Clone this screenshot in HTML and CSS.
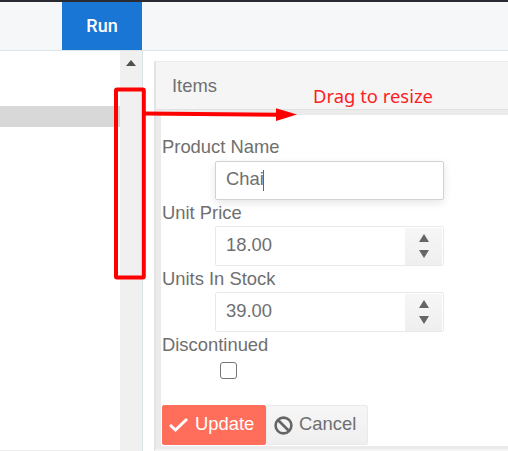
FILE: index.html
```html
<!DOCTYPE html>
<html lang="en">
<head>
<meta charset="utf-8">
<title>Editor preview</title>
<link rel="stylesheet" href="styles.css">
</head>
<body>
<header class="toolbar"><button class="run">Run</button></header>
<main class="workspace">
  <section class="code">
    <div class="lines"><div class="active-line"></div></div>
    <div class="scrollbar"><svg width="10" height="6" viewBox="0 0 10 6"><path d="M0 6L5 0L10 6Z" fill="#505050"/></svg></div>
  </section>
  <section class="preview">
    <div class="grid">
      <div class="grid-header">Items</div>
      <form class="editor">
        <label class="name">Product Name</label>
        <div class="field focused"><span class="value">Chai</span><i class="caret"></i></div>
        <label class="name">Unit Price</label>
        <div class="field"><span class="value">18.00</span>
          <span class="spinner"><svg width="10" height="24" viewBox="0 0 10 24"><path d="M0 8L5 0L10 8ZM0 16L5 24L10 16Z" fill="#656565"/></svg></span>
        </div>
        <label class="name">Units In Stock</label>
        <div class="field"><span class="value">39.00</span>
          <span class="spinner"><svg width="10" height="24" viewBox="0 0 10 24"><path d="M0 8L5 0L10 8ZM0 16L5 24L10 16Z" fill="#656565"/></svg></span>
        </div>
        <label class="name">Discontinued</label>
        <span class="check"></span>
        <div class="actions">
          <button type="button" class="btn primary"><svg width="20" height="16" viewBox="0 0 20 16"><path d="M1 8L6.5 13L18 2" fill="none" stroke="#fff" stroke-width="3"/></svg><span>Update</span></button>
          <button type="button" class="btn cancel"><svg width="19" height="19" viewBox="0 0 19 19"><g fill="none" stroke="#656565" stroke-width="2.6"><circle cx="9.5" cy="9.5" r="7.9"/><path d="M4 4L15 15"/></g></svg><span>Cancel</span></button>
        </div>
      </form>
    </div>
  </section>
</main>
<svg class="annotation" width="508" height="451" viewBox="0 0 508 451">
  <rect x="116" y="89.5" width="27.8" height="188" rx="1" fill="none" stroke="#f00" stroke-width="4"/>
  <path d="M143 113.4L278 114.7" stroke="#f00" stroke-width="4"/>
  <path d="M276 108.3L297 114.6L276 121Z" fill="#f00"/>
  <text class="note" x="313" y="102.5" textLength="120" lengthAdjust="spacingAndGlyphs">Drag to resize</text>
</svg>
</body>
</html>
```
FILE: styles.css
```css
* { box-sizing: border-box; }
body {
  margin: 0;
  height: 451px;
  display: flex;
  flex-direction: column;
  overflow: hidden;
  background: #fff;
  color: #6f6f6f;
  font: 18.4px "Liberation Sans", Arial, sans-serif;
}
.toolbar {
  flex: 0 0 51px;
  padding-left: 62px;
  background: #f5f7f9;
  border-top: 2px solid #2b2a32;
  border-bottom: 1px solid #dce5e8;
}
.run {
  display: block;
  width: 80px;
  height: 48px;
  padding: 0 0 2px;
  border: 0;
  background: #1976d5;
  color: #fff;
  font: 500 18px Roboto, sans-serif;
}
.workspace { flex: 1; display: flex; min-height: 0; }
.code {
  flex: 0 0 143px;
  display: flex;
  border-right: 1px solid #dce5e8;
}
.lines { flex: 1; padding-top: 55px; border-bottom: 1px solid #eee; }
.active-line { height: 21px; background: #d8d8d8; }
.scrollbar {
  flex: 0 0 22px;
  padding-top: 9px;
  background: #f0f0f0;
  text-align: center;
  line-height: 0;
}
.preview { flex: 1; padding: 10px 0 0 11px; min-width: 0; }
.grid {
  height: 390px;
  border-left: 2px solid #e3e3e3;
  border-top: 1px solid #ececec;
  border-bottom: 2px solid #f4f4f4;
  display: flex;
  flex-direction: column;
}
.grid-header {
  flex: 0 0 48px;
  padding-left: 16px;
  background: #f5f5f5;
  border-bottom: 1px solid #e2e2e2;
  line-height: 47px;
}
.editor {
  flex: 1;
  min-height: 0;
  padding: 19px 0 0 1px;
  border: solid #ebebeb;
  border-width: 5px 0 3px 5px;
  display: flex;
  flex-direction: column;
}
.name { height: 26.2px; line-height: 26px; flex-shrink: 0; }
.field {
  width: 229px;
  height: 39.8px;
  margin-left: 53px;
  border: 1px solid #e9e9e9;
  border-radius: 2px;
  display: flex;
  align-items: center;
  padding-left: 10px;
  flex-shrink: 0;
}
.name:first-child { height: 26.5px; }
.focused { border-color: #d2d2d2; box-shadow: 0 3px 9px rgba(0,0,0,.1); }
.value { position: relative; top: -1px; }
.caret { width: 1px; height: 21px; margin-left: -1px; background: #666; }
.spinner {
  width: 37px;
  height: 37px;
  margin: 0 1px 0 auto;
  background: linear-gradient(#f6f6f6, #efefef);
  display: flex;
  align-items: center;
  justify-content: center;
}
.check {
  width: 17px;
  height: 17px;
  margin: 4px 0 0 58px;
  border: 1px solid #767676;
  border-radius: 3px;
  flex-shrink: 0;
}
.actions { display: flex; margin-top: 25.5px; }
.btn {
  height: 40px;
  padding: 0 0 2px 6px;
  display: flex;
  align-items: center;
  gap: 6px;
  border: 1px solid #eaeaea;
  border-radius: 2px;
  background: linear-gradient(#f6f6f6, #efefef);
  color: #6f6f6f;
  font: inherit;
}
.btn svg { position: relative; top: 1.5px; }
.primary { width: 104px; background: #ff6e5a; border-color: #ff6e5a; color: #fff; }
.cancel { width: 102px; padding-left: 7px; }
.annotation { position: absolute; left: 0; top: 0; pointer-events: none; }
.note { fill: #ff1c24; font: 18px "Noto Sans", sans-serif; }
```
